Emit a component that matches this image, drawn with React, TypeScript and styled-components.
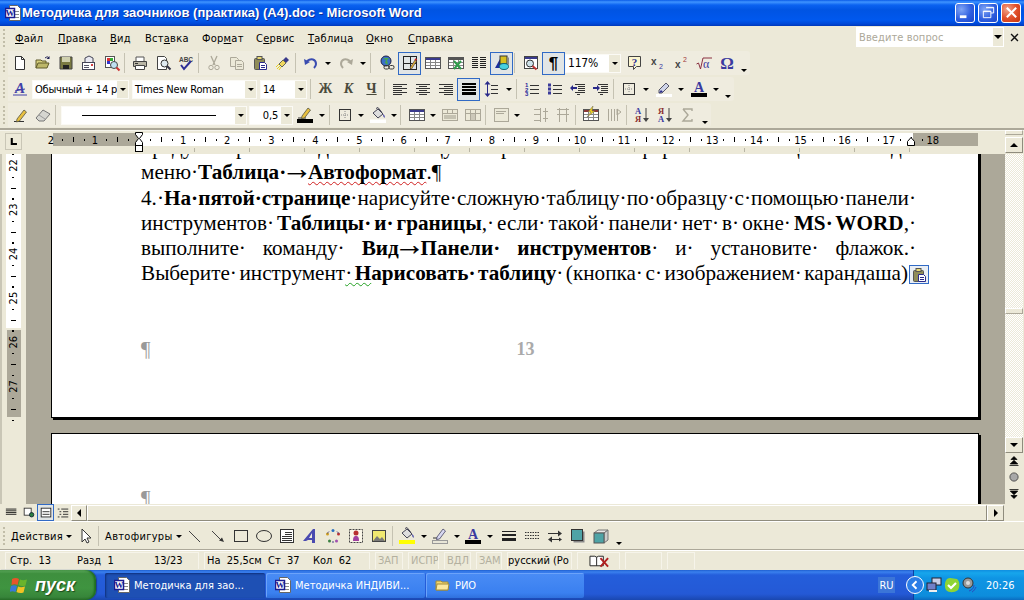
import React from "react";
import styled, { createGlobalStyle, css } from "styled-components";

const UI = `"DejaVu Sans Condensed", "DejaVu Sans", sans-serif`;
const FACE = "#ece9d8";
const DIM = "#aca899";

const Global = createGlobalStyle`
  html, body { margin: 0; padding: 0; width: 1024px; height: 600px; overflow: hidden; background: ${FACE}; }
  #root { width: 1024px; height: 600px; }
  * { box-sizing: border-box; }
`;

const Win = styled.div`
  width: 1024px; height: 600px; display: flex; flex-direction: column; overflow: hidden;
  background: ${FACE}; font: 400 11px ${UI}; font-stretch: condensed; color: #000;
`;

const Title = styled.header`
  height: 26px; flex: none; display: flex; align-items: center; padding: 0 3px 1px 5px; gap: 3px;
  background: linear-gradient(#0a5be8 0, #3f94ff 2px, #0b62f0 5px, #0054e3 10px, #0058ee 20px, #0047d6 24px, #0037b8 26px);
`;
const TitleText = styled.span`
  flex: 1; color: #fff; font: 700 13px "Liberation Sans", sans-serif;
  text-shadow: 1px 1px 0 #0f2f9a; white-space: nowrap; margin-left: -2px;
`;
const WinBtn = styled.div<{ $close?: boolean }>`
  width: 20px; height: 20px; border: 1px solid #fff; border-radius: 3px; display: flex; align-items: center; justify-content: center;
  background: ${p => p.$close
    ? "radial-gradient(circle at 30% 30%, #f0a58c, #e2512c 50%, #c4340d)"
    : "radial-gradient(circle at 30% 30%, #7fa5f5, #2f5fe0 55%, #1d47c8)"};
`;

const Menu = styled.nav`height: 24px; flex: none; display: flex; align-items: center; padding-left: 3px;`;
const Grip = styled.div`
  width: 2px; height: 18px; flex: none; margin-right: 3px;
  background: repeating-linear-gradient(#c1bda8 0 2px, transparent 2px 4px);
`;
const MenuItem = styled.span<{ $w: number }>`
  width: ${p => p.$w}px; flex: none; font-size: 11px; letter-spacing: .25px; white-space: nowrap;
  u { text-underline-offset: 1px; }
`;
const Ask = styled.div`
  margin-left: auto; width: 148px; height: 20px; background: #fff; display: flex; align-items: center;
  color: ${DIM}; padding-left: 3px; font-size: 11px; letter-spacing: .1px;
  justify-content: space-between; margin-top: -2px;
`;
const AskDrop = styled.span`width: 11px; height: 100%; background: ${FACE}; border: 1px solid #fff; border-width: 1px 1px 1px 0; display: flex; align-items: center; justify-content: center;`;
const CloseX = styled.span`width: 20px; flex: none; display: flex; justify-content: center; margin-top: -2px;`;

const Bar = styled.div`height: 26px; flex: none; padding-left: 3px; display: flex; align-items: center;`;
const BarBody = styled.div`
  height: 24px; display: flex; align-items: center; border-radius: 0 3px 3px 0; background: #efecdf;
`;
const Tool = styled.div<{ $on?: boolean; $w?: number }>`
  width: ${p => p.$w ?? 23}px; height: 23px; flex: none; display: flex; align-items: center; justify-content: center;
  ${p => p.$on && css`border: 1px solid #316ac5; background: #e1e5e6;`}
`;
const Caret = styled.div<{ $w: number }>`
  width: ${p => p.$w}px; height: 22px; flex: none; display: flex; align-items: center; justify-content: center;
  &::after { content: ""; border: 3px solid transparent; border-top: 3px solid #000; border-bottom: 0; width: 0; height: 0; }
`;
const More = styled(Caret)`align-items: flex-end; padding-bottom: 2px;`;
const Sep = styled.div`width: 1px; height: 20px; flex: none; margin: 0 3px 0 1px; background: #c5c2b2;`;
const Gap = styled.div<{ $w: number }>`width: ${p => p.$w}px; flex: none;`;
const Combo = styled.div<{ $w: number; $mr?: number; $ml?: number; $size?: number }>`
  width: ${p => p.$w}px; height: 19px; flex: none; display: flex; align-items: center; background: #fff; overflow: hidden;
  margin-left: ${p => p.$ml ?? 0}px; margin-right: ${p => p.$mr ?? 0}px; font-size: ${p => p.$size ?? 11}px;
  white-space: nowrap; border: 1px solid #fbfaf5; letter-spacing: -.2px;
`;
const ComboText = styled.span<{ $right?: boolean }>`
  flex: 1; min-width: 0; overflow: hidden; padding-left: 2px; text-align: ${p => p.$right ? "right" : "left"}; padding-right: ${p => p.$right ? 3 : 0}px;
`;
const ComboDrop = styled.span`
  width: 11px; height: 100%; flex: none; background: ${FACE}; display: flex; align-items: center; justify-content: center;
  &::after { content: ""; border: 3px solid transparent; border-top: 3px solid #000; border-bottom: 0; }
`;
const BoldBtn = styled.span<{ $i?: boolean; $u?: boolean }>`
  font: ${p => (p.$i ? "italic " : "")}700 14px "Liberation Serif", serif; color: #4a4a3c;
  text-decoration: ${p => p.$u ? "underline" : "none"};
`;
const Pilcrow = styled.span`font: 700 17px "Liberation Sans", sans-serif; color: #000; margin-top: 1px;`;
const ToolText = styled.span`padding: 0 2px 0 3px; display: flex; align-items: center; gap: 3px; font-size: 11px; letter-spacing: .3px; white-space: nowrap;`;

const RulerRow = styled.div`
  height: 26px; flex: none; display: flex; align-items: flex-start; padding-left: 5px;
  border-top: 2px solid #aca899; box-shadow: inset 0 1px 0 #fff8;
`;
const Corner = styled.div`
  width: 17px; height: 17px; margin-top: 3px; border: 1px solid #aca899; border-color: #fff #aca899 #aca899 #fff; flex: none;
  display: flex; align-items: center; justify-content: center; outline: 1px solid #c9c6b6; outline-offset: -1px;
`;
const RulerSvg = styled.svg`width: 925px; height: 24px; margin-left: 31px; flex: none; overflow: visible;`;
const TopCol = styled.div`
  margin-left: auto; width: 18px; margin-right: 1px; flex: none; display: flex; flex-direction: column;
`;
const Split = styled.div`height: 5px; border: 1px solid #aca899; border-top-color: #fff; border-left-color: #fff; margin-bottom: 2px;`;

const Main = styled.div`height: 350px; flex: none; display: flex;`;
const VRulerSvg = styled.svg`width: 26px; height: 350px; flex: none;`;
const Work = styled.main`flex: 1; min-width: 0; background: ${DIM}; overflow: hidden; padding-left: 25px;`;
const Page = styled.article<{ $top: number; $h: number; $pad: number }>`
  width: 928px; height: ${p => p.$h}px; margin-top: ${p => p.$top}px; background: #fff; border: 1px solid #000;
  box-shadow: 2px 2px 0 #000; padding: ${p => p.$pad}px 0 0 89px; font: 400 21.2px/25.3px "Liberation Serif", serif;
`;
const Line = styled.div<{ $free?: boolean; $w?: number }>`
  width: ${p => p.$w ?? 775}px; flex: none; white-space: nowrap; word-spacing: -.25em; text-align: ${p => p.$free ? "left" : "justify"};
  text-align-last: ${p => p.$free ? "left" : "justify"};
`;
const LastRow = styled.div`display: flex; align-items: center;`;
const Wavy = styled.span<{ $c: string }>`
  text-decoration: underline wavy ${p => p.$c} 1px; text-underline-offset: 2px; text-decoration-skip-ink: none;
`;
const Arrow = styled.span`display: inline-block; font-size: 1.45em; font-weight: 400; line-height: 0; margin: 0 -4.5px; -webkit-text-stroke: .3px #000;`;
const Mark = styled.span`color: #999; font: 400 21px/1 "Liberation Serif", serif;`;
const Anchor = styled.span`
  display: flex; width: 20px; height: 19px; border: 1px solid #316ac5; background: #e9eef4; flex: none;
  align-items: center; justify-content: center; margin: 1px 0 0 1px;
`;
const Footer = styled.div<{ $mt: number }>`
  margin-top: ${p => p.$mt}px; width: 775px; display: flex; height: 24px; align-items: center;
`;
const PageNo = styled.span`margin-left: 366px; color: #aaa; font: 700 18px "Liberation Serif", serif;`;

const VScroll = styled.aside`width: 18px; flex: none; margin-right: 1px; display: flex; flex-direction: column; background: ${FACE};`;
const Track = styled.div`
  flex: 1; padding-top: 154px;
  background: repeating-conic-gradient(#fff 0 25%, ${FACE} 0 50%) 0 0 / 2px 2px;
`;
const Thumb = styled.div`height: 6px; background: ${FACE}; border: 1px solid #aca899; border-top-color: #fff; border-left-color: #fff;`;
const ScrollBtn = styled.div<{ $w?: number; $h?: number }>`
  width: ${p => p.$w ?? 18}px; height: ${p => p.$h ?? 16}px; flex: none; background: ${FACE}; display: flex; align-items: center; justify-content: center;
  border: 1px solid; border-color: #fff #8f8c7d #8f8c7d #fff;
`;
const Browse = styled.div`height: 51px; flex: none; display: flex; flex-direction: column; align-items: center; justify-content: space-around; padding-bottom: 2px;`;

const HScroll = styled.div`height: 17px; flex: none; display: flex; align-items: center; padding-left: 3px;`;
const ViewBtn = styled.div<{ $on?: boolean }>`
  width: 17px; height: 17px; flex: none; display: flex; align-items: center; justify-content: center;
  ${p => p.$on && css`border: 1px solid #316ac5; background: #e1e5e6;`}
`;
const HThumb = styled.div`flex: none; width: 900px; height: 16px; background: ${FACE}; border: 1px solid; border-color: #fff #8f8c7d #8f8c7d #fff;`;

const DrawBar = styled.div`
  height: 28px; flex: none; display: flex; align-items: center; padding-left: 3px; border-top: 1px solid #fff; padding-top: 1px;
`;
const Status = styled.footer`
  height: 21px; flex: none; display: flex; align-items: center; padding: 0 0 0 5px; border-top: 1px solid #aca899; box-shadow: inset 0 1px 0 #fff; gap: 5px;
`;
const Cell = styled.div<{ $w: number; $dim?: boolean; $pl?: number }>`
  width: ${p => p.$w}px; height: 17px; flex: none; display: flex; align-items: center; white-space: pre; padding-left: ${p => p.$pl ?? 0}px;
  color: ${p => p.$dim ? "#b3b09f" : "#000"}; border: 1px solid #f6f4ea; border-width: 1px 1px 0 1px; font-size: 11px; overflow: hidden;
`;
const Span = styled.span<{ $w: number }>`width: ${p => p.$w}px; flex: none;`;

const Taskbar = styled.div`
  height: 30px; flex: none; display: flex; align-items: center; color: #fff;
  background: linear-gradient(#1f5fd0 0, #3a80ee 2px, #245edb 5px, #2459d6 24px, #1a47b0 30px);
`;
const Start = styled.div`
  width: 96px; height: 30px; flex: none; display: flex; align-items: center; gap: 5px; padding-left: 10px; margin-right: 9px;
  border-radius: 0 10px 10px 0; box-shadow: inset -2px 0 2px #1f6d1f, 1px 0 1px #1b3e8c;
  background: linear-gradient(#5eab5e 0, #3e8f3e 12%, #3f9440 60%, #37853a 90%, #2a6e2c 100%);
`;
const StartText = styled.span`font: italic 700 18px "Liberation Sans", sans-serif; color: #fff; text-shadow: 1px 1px 1px #1c4a1c;`;
const Task = styled.div<{ $on?: boolean; $w: number }>`
  width: ${p => p.$w}px; height: 25px; flex: none; display: flex; align-items: center; gap: 4px; padding-left: 9px; margin-right: 1px;
  border-radius: 2px; font-size: 11px; white-space: nowrap; overflow: hidden;
  background: ${p => p.$on ? "#1e50b4" : "linear-gradient(#4a8cf5, #3a80f0 80%, #2f70dd)"};
  box-shadow: ${p => p.$on ? "inset 1px 1px 2px #0f2f7a" : "inset 1px 1px 0 #6ba3fa"};
`;
const Lang = styled.span`
  margin-left: auto; width: 17px; height: 16px; background: #3b75d8; display: flex; align-items: center; justify-content: center; font-size: 11px; margin-right: 18px;
`;
const Tray = styled.div`
  width: 111px; height: 30px; flex: none; display: flex; align-items: center; gap: 2px;
  background: linear-gradient(#0f8ee0 0, #17a6ec 3px, #0f95e4 8px, #0d8ddc 26px, #0a6cc0 30px);
  border-left: 1px solid #0d3fa0; font-size: 11px;
`;
const Chevron = styled.div`
  width: 18px; height: 18px; border-radius: 50%; border: 1px solid #fff; margin: 0 0 0 -8px; background: #2b7de6;
  display: flex; align-items: center; justify-content: center; flex: none;
`;
const Clock = styled.span`margin-left: 6px;`;

const Glyph = styled.svg<{ $w?: number; $h?: number }>`
  width: ${p => p.$w ?? 16}px; height: ${p => p.$h ?? 16}px; flex: none; display: block;
`;

const serif = "Liberation Serif, serif";
const sans = "Liberation Sans, sans-serif";
const tableGrid = (c = "#555", head = "#3a3a8c") => (
  <>
    <rect x=".5" y="2.5" width="15" height="11" fill="#fff" stroke={c} />
    <rect x="1" y="3" width="14" height="2" fill={head} />
    <path d="M1 7.5h14M1 10.5h14M5.5 5v8M10.5 5v8" stroke={c} opacity=".7" />
  </>
);
const lines = (rows: [number, number, number][], c = "#333") => (
  <path d={rows.map(([y, a, b]) => `M${a} ${y}.5H${b}`).join("")} stroke={c} fill="none" />
);
const Aletter = (c: string) => <text x="8" y="11" textAnchor="middle" fontFamily={serif} fontWeight="700" fontSize="14" fill={c}>A</text>;
const bucket = <><path d="M3 7l5-4 5 5-5 4z" fill="#ddd" stroke="#445" /><path d="M6 2.5l2-1 4 5" fill="none" stroke="#445" /><path d="M13 8c2 1 2 3 1.5 4-1-1-1.5-2-1.5-4z" fill="#4a4aa8" /></>;
const smallFolder = <><path d="M1 4h5l1 1h6v8H1z" fill="#f3d66e" stroke="#a08c3a" /><path d="M2 7h12l-1 6H1z" fill="#fbe9a0" stroke="#a08c3a" /></>;

const icons: Record<string, React.ReactNode> = {
  new: <><path d="M3.5 1.5h6l3 3v10h-9z" fill="#fff" stroke="#333" /><path d="M9.5 1.5v3h3" fill="none" stroke="#333" /></>,
  open: <><path d="M1 13V5h5l1 1h4v2" fill="#d6cf7c" stroke="#5e5a2a" /><path d="M1 13l2-5h11l-2 5z" fill="#bdb76a" stroke="#5e5a2a" /><path d="M10 3c2-1.5 3-1.5 4 0" fill="none" stroke="#225" /><path d="M14.5 1v3h-3z" fill="#225" /></>,
  save: <><path d="M2 2h12v12H2z" fill="#7a7a42" stroke="#444" /><rect x="4" y="2" width="8" height="5" fill="#cfcfae" /><rect x="5" y="10" width="6" height="4" fill="#222" /></>,
  mail: <><rect x="1.5" y="7.5" width="12" height="7" fill="#fff" stroke="#445" /><path d="M4 7V3l4-2 4 2v4" fill="#e9e9f2" stroke="#445" />{lines([[10, 3, 8], [12, 3, 8]], "#556")}<rect x="10" y="9" width="2" height="2" fill="#d04040" /></>,
  perm: <><rect x="1.5" y="1.5" width="9" height="11" fill="#fff" stroke="#555" /><rect x="3" y="3" width="3" height="3" fill="#d33" /><rect x="6" y="3" width="3" height="3" fill="#3a3" /><rect x="3" y="6" width="3" height="3" fill="#33c" /><circle cx="10" cy="10" r="3.5" fill="#bfe0f0" stroke="#444" /><path d="M12.5 12.5l3 3" stroke="#c33" strokeWidth="2" /></>,
  print: <><path d="M4 6V2h8v4" fill="#fff" stroke="#555" /><path d="M1.5 6.5h13v5h-13z" fill="#b9b6a6" stroke="#444" /><path d="M3.5 10.5h9v4h-9z" fill="#fff" stroke="#444" />{lines([[8, 3, 6]], "#333")}</>,
  preview: <><path d="M2.5 1.5h7l2 2v11h-9z" fill="#fff" stroke="#444" /><circle cx="9.5" cy="8.5" r="3.5" fill="#dfeaf0" stroke="#333" /><path d="M12 11l3.5 3.5" stroke="#334" strokeWidth="2" /></>,
  spell: <><text x="8" y="6.5" textAnchor="middle" fontFamily={sans} fontWeight="700" fontSize="6.5" fill="#444">ABC</text><path d="M3 10l3 4 7-8" fill="none" stroke="#2d2f96" strokeWidth="2" /></>,
  cut: <><path d="M5 1l4 9M11 1L7 10" stroke={DIM} fill="none" strokeWidth="1.3" /><circle cx="5" cy="12.5" r="2.2" fill="none" stroke={DIM} /><circle cx="11" cy="12.5" r="2.2" fill="none" stroke={DIM} /></>,
  copy: <><path d="M1.5 2.5h6l2 2v7h-8z" fill={FACE} stroke={DIM} /><path d="M6.5 5.5h6l2 2v7h-8z" fill={FACE} stroke={DIM} />{lines([[9, 8, 13], [11, 8, 13]], DIM)}</>,
  paste: <><rect x="2.5" y="3.5" width="10" height="11" rx="1" fill="#8f8c58" stroke="#555" /><rect x="5" y="1.5" width="5" height="3" fill="#e8d870" stroke="#555" /><path d="M7.5 7.5h5l2 2v5h-7z" fill="#fff" stroke="#2a2a8a" />{lines([[10, 9, 13], [12, 9, 13]], "#2a2a8a")}</>,
  painter: <><path d="M11 2l3 3-3 3-3-3z" fill="#3a3a8a" /><path d="M8 5l3 3-4 4-3-3z" fill="#f0d860" stroke="#665" /><path d="M4 9l-3 3M5 11l-3 3M6 12l-2 3" stroke="#e8d020" /></>,
  undo: <><path d="M4 6c4-3 9-2 9 3 0 2-1 3-2 4" fill="none" stroke="#3a4cb0" strokeWidth="2" /><path d="M1 4l1 6 5-3z" fill="#3a4cb0" /></>,
  redo: <><path d="M12 6C8 3 3 4 3 9c0 2 1 3 2 4" fill="none" stroke={DIM} strokeWidth="2" /><path d="M15 4l-1 6-5-3z" fill={DIM} /></>,
  link: <><circle cx="7" cy="6" r="5" fill="#3b6fc8" stroke="#224" /><path d="M4 3l3 2-1 3 3 2-1-5 2-2z" fill="#4aa84a" /><rect x="5" y="10.5" width="5" height="3.5" rx="1.5" fill="none" stroke="#333" /><rect x="10" y="10.5" width="5" height="3.5" rx="1.5" fill="none" stroke="#333" /></>,
  tabbord: <><rect x="1.5" y="1.5" width="13" height="13" fill="none" stroke="#222" /><path d="M8.5 2v12M2 8.5h12" stroke="#222" /><path d="M8 13l5-8 1.5 1-5 8z" fill="#e8b830" stroke="#544" strokeWidth=".7" /><path d="M13 4l1.5 1" stroke="#c22" strokeWidth="2" /></>,
  table: tableGrid(),
  excel: <>{tableGrid("#555", "#555")}<path d="M6 6l7 8M13 6l-7 8" stroke="#2f9c4c" strokeWidth="2" /></>,
  cols: lines([[2, 1, 7], [4, 1, 7], [6, 1, 7], [8, 1, 7], [10, 1, 7], [12, 1, 7], [2, 9, 15], [4, 9, 15], [6, 9, 15], [8, 9, 15], [10, 9, 15], [12, 9, 15]], "#222"),
  drawing: <><path d="M1 13l5-9v9z" fill="#1c2e9c" /><rect x="6" y="1" width="7" height="8" fill="#d8c020" stroke="#333" /><path d="M13 1l2 2v7l-2-1z" fill="#888" /><ellipse cx="10" cy="11.5" rx="4.5" ry="3" fill="#48d0e0" stroke="#167" /></>,
  docmap: <><rect x="1.5" y="1.5" width="13" height="12" fill="#fff" stroke="#444" /><rect x="2" y="2" width="12" height="2" fill="#3a3a8c" /><circle cx="7" cy="8.5" r="3.5" fill="#cfe3ea" stroke="#333" /><path d="M9.5 11l4 3.5" stroke="#b33" strokeWidth="2" /></>,
  help: <><path d="M1.5 1.5h12v10h-4l-3 3v-3h-5z" fill="#fbf5cf" stroke="#444" /><text x="7.5" y="10.5" textAnchor="middle" fontFamily={serif} fontWeight="700" fontSize="11" fill="#2a2a90">?</text></>,
  sub: <><text x="1" y="10" fontFamily={sans} fontWeight="700" fontSize="10" fill="#444">x</text><text x="9" y="14" fontFamily={sans} fontSize="7" fill="#3a3aa0">2</text></>,
  sup: <><text x="2" y="13" fontFamily={sans} fontWeight="700" fontSize="10" fill="#444">x</text><text x="10" y="7" fontFamily={sans} fontSize="7" fill="#a03a3a">2</text></>,
  sqrt: <><path d="M.5 9l2-1 2 6L7 3h9" fill="none" stroke="#8a3040" /><text x="7" y="13" fontFamily={serif} fontSize="12" fill="#3a3aa0">α</text></>,
  omega: <text x="8" y="13.5" textAnchor="middle" fontFamily={serif} fontWeight="700" fontSize="17" fill="#3a3aa0">Ω</text>,
  style: <><text x="8" y="12" textAnchor="middle" fontFamily={serif} fontStyle="italic" fontWeight="700" fontSize="15" fill="#4040a8">A</text><path d="M1 14h14M3 10l10-2" stroke="#4040a8" /></>,
  left: lines([[3, 1, 15], [5, 1, 10], [7, 1, 15], [9, 1, 10], [11, 1, 15], [13, 1, 10]]),
  center: lines([[3, 1, 15], [5, 4, 12], [7, 1, 15], [9, 4, 12], [11, 1, 15], [13, 4, 12]]),
  right: lines([[3, 1, 15], [5, 6, 15], [7, 1, 15], [9, 6, 15], [11, 1, 15], [13, 6, 15]]),
  justify: lines([[2, 1, 15], [3, 1, 15], [5, 1, 15], [6, 1, 15], [8, 1, 15], [9, 1, 15], [11, 1, 15], [12, 1, 15], [13, 1, 15]], "#000"),
  spacing: <>{lines([[4, 7, 14], [8, 7, 14], [12, 7, 14]])}<path d="M3.5 3v10" stroke="#2a2a8a" /><path d="M3.5 0l3 3.5h-6zM3.5 16l3-3.5h-6z" fill="#2a2a8a" /></>,
  numbered: <>{lines([[4, 6, 15], [8, 6, 15], [12, 6, 15]])}<text x="1" y="6" fontFamily={sans} fontWeight="700" fontSize="6" fill="#2a2a9a">1</text><text x="1" y="10.5" fontFamily={sans} fontWeight="700" fontSize="6" fill="#2a2a9a">2</text><text x="1" y="15" fontFamily={sans} fontWeight="700" fontSize="6" fill="#2a2a9a">3</text></>,
  bullets: <>{lines([[4, 6, 15], [8, 6, 15], [12, 6, 15]])}<path d="M1 2.5h3v3H1zM1 6.5h3v3H1zM1 10.5h3v3H1z" fill="#3a3a9a" /></>,
  outdent: <>{lines([[3, 5, 15], [5, 8, 15], [7, 8, 15], [9, 8, 15], [11, 5, 15], [13, 7, 10]])}<path d="M0 7l3-3v2h4v2H3v2z" fill="#2a2a8a" /></>,
  indent: <>{lines([[3, 5, 15], [5, 8, 15], [7, 8, 15], [9, 8, 15], [11, 5, 15], [13, 7, 10]])}<path d="M7 7L4 4v2H0v2h4v2z" fill="#2a2a8a" /></>,
  border: <><rect x="2.5" y="2.5" width="11" height="11" fill="none" stroke="#333" /><path d="M8 4v8M4 8h8" stroke="#888" strokeDasharray="1 1" /></>,
  highlight: <><path d="M3 9l7-7 3 3-7 7H3z" fill="#cfd4e8" stroke="#556" /><path d="M3 12l2-3 2 2z" fill="#2a2a8a" /><rect x="0" y="13" width="16" height="3" fill="#fff" /></>,
  fontColor: <>{Aletter("#3a3aa0")}<rect y="12" width="16" height="4" fill="#000" /></>,
  pencil: <><path d="M2 14.5h10" stroke="#333" /><path d="M5 12l7-9 2.5 2-7 9-3 1z" fill="#e8c040" stroke="#554" strokeWidth=".8" /></>,
  eraser: <><path d="M1 11l7-8 7 4-6 7H4z" fill="#d6d6d0" stroke="#777" /><path d="M4 8l6 4" stroke="#999" /></>,
  penColor: <><path d="M1 11h8" stroke="#333" /><path d="M5 9l6-8 2.5 2-6 8-3 .5z" fill="#e8c040" stroke="#554" strokeWidth=".8" /><rect y="12" width="16" height="4" fill="#000" /></>,
  fill: <><g transform="translate(0 -1)">{bucket}</g><rect x="0" y="12.5" width="16" height="3.5" fill="#fff" /></>,
  itable: tableGrid(),
  merge: <><rect x=".5" y="2.5" width="15" height="11" fill={FACE} stroke={DIM} /><path d="M1 6.5h14M5.5 3v3M10.5 3v3" stroke={DIM} /><rect x="2" y="8" width="12" height="4" fill={DIM} opacity=".6" /></>,
  split: <><rect x=".5" y="2.5" width="15" height="11" fill={FACE} stroke={DIM} /><path d="M1 6.5h14M5.5 3v10M10.5 3v10" stroke={DIM} /><rect x="6" y="7" width="4" height="6" fill={DIM} opacity=".5" /></>,
  alignCell: <><rect x="1.5" y="1.5" width="14" height="13" fill={FACE} stroke={DIM} />{lines([[4, 3, 13], [6, 3, 11]], DIM)}</>,
  distR: <path d="M2 2.5h6M2 7.5h6M2 13.5h6M13.5 1v14M11 4.5h5M11 11.5h5M8.5 1v14" stroke={DIM} fill="none" />,
  distC: <path d="M2 2.5h12M2 7.5h12M4.5 1v14M11.5 1v14" stroke={DIM} fill="none" />,
  auto: <>{tableGrid("#555", "#8c3a3a")}<path d="M10 -1L5 5h3L4 10l8-6H9z" fill="#f0d020" stroke="#665" strokeWidth=".5" /></>,
  dirT: <path d="M2.5 2v12M5.5 2v12M8.5 2v12M11.5 2v12M11 2l4 3-4 3z" stroke={DIM} fill={FACE} />,
  az: <><text x="4" y="7" textAnchor="middle" fontFamily={serif} fontWeight="700" fontSize="8.5" fill="#3a3aa0">A</text><text x="4" y="15" textAnchor="middle" fontFamily={serif} fontWeight="700" fontSize="8.5" fill="#8a3030">Я</text><path d="M12 1v12" stroke="#444" /><path d="M9 11h6l-3 4z" fill="#444" /></>,
  za: <><text x="4" y="7" textAnchor="middle" fontFamily={serif} fontWeight="700" fontSize="8.5" fill="#8a3030">Я</text><text x="4" y="15" textAnchor="middle" fontFamily={serif} fontWeight="700" fontSize="8.5" fill="#3a3aa0">A</text><path d="M12 1v12" stroke="#444" /><path d="M9 11h6l-3 4z" fill="#444" /></>,
  sigma: <path d="M3 2h9v2M3 2l5 6-5 6h9v-2" fill="none" stroke={DIM} strokeWidth="1.4" />,
  pointer: <path d="M4 1v13l3-3 2 4 2-1-2-4h4z" fill="#fff" stroke="#333" />,
  dline: <path d="M2 3l11 11" stroke="#444" />,
  darrow: <><path d="M2 3l9 9" stroke="#444" /><path d="M14 14l-5-1.5 3-3z" fill="#333" /></>,
  rect: <rect x="1.5" y="2.5" width="13" height="11" fill="none" stroke="#333" />,
  ellipse: <ellipse cx="8" cy="8" rx="7.5" ry="5.5" fill="none" stroke="#333" />,
  textbox: <><rect x="1.5" y="1.5" width="13" height="13" fill="#fff" stroke="#333" />{lines([[4, 6, 13], [6, 6, 13], [8, 3, 13], [10, 3, 13], [12, 3, 13]])}</>,
  wordart: <><path d="M1 13L11 1h2v14h-3v-3H6l-2 1z" fill="#4a4ab0" /><path d="M10 5v5H7z" fill="#efecdf" /></>,
  diagram: <><circle cx="8" cy="2.5" r="1.5" fill="#2a70c0" /><circle cx="13.5" cy="6" r="1.5" fill="#c03030" /><circle cx="11.5" cy="13" r="1.5" fill="#a050b0" /><circle cx="4.5" cy="13" r="1.5" fill="#3a8040" /><circle cx="2.5" cy="6" r="1.5" fill="#d0a020" /><path d="M4 3.5c-1 1-1.5 1.5-1.5 2M12 3.5c1 1 1.5 1.5 1.5 2M7 14h2" stroke="#448" fill="none" /></>,
  clip: <><rect x="1.5" y="1.5" width="13" height="13" fill="#faf6e8" stroke="#444" strokeDasharray="2 1" /><circle cx="8" cy="5" r="2.5" fill="#b83030" /><path d="M5 13c0-4 1-5 3-5s3 1 3 5z" fill="#a040a0" /></>,
  image: <><rect x="1.5" y="2.5" width="13" height="11" fill="#f0e870" stroke="#444" /><path d="M2 13l4-5 3 3 2-2 3 4z" fill="#7a7a78" /></>,
  dfill: <><g transform="translate(0 -2)">{bucket}</g><rect y="12" width="16" height="4" fill="#ffff00" /></>,
  dpen: <><path d="M1 10h7" stroke="#333" /><path d="M5 9l6-8 2.5 2-6 8-3 .5z" fill="#d8d8f0" stroke="#446" strokeWidth=".8" /><rect x=".5" y="12.5" width="15" height="3" fill="#e8e6d8" stroke="#999" /></>,
  lstyle: lines([[3, 1, 15], [6, 1, 15], [7, 1, 15], [10, 1, 15], [11, 1, 15], [12, 1, 15]], "#222"),
  dash: <path d="M1 4.5h14M1 7.5h14M1 10.5h14" stroke="#333" strokeDasharray="1.5 1" fill="none" />,
  arrows: <><path d="M1 5.5h13M3 11.5h11" stroke="#333" /><path d="M15 5.5l-4-3v6zM1 11.5l4-3v6zM15 11.5l-3-2v4z" fill="#333" /></>,
  shadow: <><rect x="3.5" y="3.5" width="11" height="11" fill="#888" /><rect x="1.5" y="1.5" width="11" height="11" fill="#4ea3a6" stroke="#333" /></>,
  d3: <><path d="M1 5l4-3h10l-4 3z" fill="#e8e8e8" stroke="#777" /><path d="M11 5l4-3v10l-4 3z" fill="#ccc" stroke="#777" /><rect x="1" y="5" width="10" height="10" fill="#4ea3a6" stroke="#555" /></>,
  view1: lines([[3, 1, 13], [5, 1, 13], [7, 1, 13], [9, 1, 13]], "#111"),
  view2: <><rect x="2.5" y="2.5" width="8" height="8" fill="#fff" stroke="#333" /><circle cx="11" cy="10" r="2.5" fill="#2a8040" stroke="#123" /></>,
  view3: <><rect x="2.5" y="2.5" width="11" height="10" fill="#fff" stroke="#222" />{lines([[6, 4, 12], [9, 4, 12]], "#222")}</>,
  view4: <path d="M2 3.5h2M6 3.5h8M4 6.5h2M8 6.5h6M4 9.5h2M8 9.5h6M2 12.5h2M6 12.5h8" stroke="#222" />,
};

const Icon = ({ n, w, h }: { n: string; w?: number; h?: number }) => (
  <Glyph viewBox="0 0 16 16" $w={w} $h={h} overflow="visible">{icons[n]}</Glyph>
);

const Items = ({ spec }: { spec: string }) => (
  <>
    {spec.split(" ").map((t, i) => {
      if (t === "|") return <Sep key={i} />;
      if (t === "v") return <Caret key={i} $w={12} />;
      if (t === "w") return <Caret key={i} $w={10} />;
      if (t === "+") return <More key={i} $w={12} />;
      if (t[0] === "_") return <Gap key={i} $w={Number(t.slice(1))} />;
      const on = t[0] === "!";
      return <Tool key={i} $on={on}><Icon n={on ? t.slice(1) : t} /></Tool>;
    })}
  </>
);

const WordDoc = () => (
  <Glyph viewBox="0 0 16 16">
    <path d="M4.5 .5h8l3 3v12h-11z" fill="#fff" stroke="#666" />
    {lines([[6, 9, 14], [9, 9, 14], [12, 6, 14]], "#888")}
    <rect x=".5" y="3.5" width="9" height="9" fill="#fff" stroke="#1a1a90" strokeWidth="1.5" />
    <text x="5" y="11" textAnchor="middle" fontFamily={serif} fontWeight="700" fontSize="9" fill="#1a1a90">W</text>
  </Glyph>
);

const menus: [string, number][] = [
  ["Файл", 43], ["Правка", 52], ["Вид", 35], ["Вставка", 57], ["Формат", 54],
  ["Сервис", 52], ["Таблица", 58], ["Окно", 42], ["Справка", 60],
];
const underlineAt: Record<string, number> = { Файл: 0, Правка: 0, Вид: 0, Вставка: 3, Формат: 3, Сервис: 1, Таблица: 0, Окно: 0, Справка: 0 };

const HRuler = () => {
  const cm = 44.1, o = 139;
  const marks: React.ReactNode[] = [];
  for (let k = -2; k <= 18; k++) {
    const x = o + k * cm;
    if (k !== 0) marks.push(<text key={`n${k}`} x={x} y="14" textAnchor="middle" fontFamily="DejaVu Sans Condensed, DejaVu Sans, sans-serif" fontSize="11" fill="#000">{Math.abs(k)}</text>);
    if (k < 18) {
      marks.push(<rect key={`a${k}`} x={Math.round(x + cm * .25)} y="9" width="1" height="2" fill="#000" />);
      marks.push(<rect key={`b${k}`} x={Math.round(x + cm * .5)} y="7" width="1" height="5" fill="#000" />);
      marks.push(<rect key={`c${k}`} x={Math.round(x + cm * .75)} y="9" width="1" height="2" fill="#000" />);
    }
  }
  const cols = Array.from({ length: 14 }, (_, i) => 194 + i * 55);
  return (
    <RulerSvg viewBox="53 0 925 24">
      <rect x="53" y="3" width="925" height="13" fill={DIM} />
      <rect x="140" y="3" width="771" height="13" fill="#fff" />
      <rect x="911" y="3" width="2" height="13" fill="#fff" />
      {marks}
      {cols.map(x => <rect key={x} x={x} y="18" width="1" height="4" fill="#b8b5a4" />)}
      <path d="M135.5 2.5h7v2l-3 4 3 4v3.5h-7v-3.5l3-4-3-4z" fill="#fff" stroke="#000" />
      <rect x="135.5" y="15.5" width="7" height="6" fill="#fff" stroke="#000" />
      <path d="M907.5 15.5v-4l3.5-4 3.5 4v4z" fill="#fff" stroke="#000" />
    </RulerSvg>
  );
};

const VRuler = () => {
  const nums = [22, 23, 24, 25, 26, 27];
  return (
    <VRulerSvg viewBox="0 154 26 350">
      <rect x="0" y="154" width="2" height="350" fill="#c9c6b6" />
      <rect x="6" y="154" width="15" height="174" fill="#fff" />
      <rect x="7" y="330" width="14" height="87" fill={DIM} />
      {nums.map((n, i) => {
        const y = 165.5 + i * 44.2;
        return (
          <g key={n}>
            <text transform={`translate(17 ${y}) rotate(-90)`} textAnchor="middle" fontFamily="DejaVu Sans Condensed, DejaVu Sans, sans-serif" fontSize="11" fill="#000">{n}</text>
            <rect x="12" y={Math.round(y - 12)} width="2" height="1" fill="#000" />
            <rect x="12" y={Math.round(y + 11)} width="2" height="1" fill="#000" />
            <rect x="11" y={Math.round(y + 22)} width="5" height="1" fill="#000" />
            <rect x="12" y={Math.round(y + 33)} width="2" height="1" fill="#000" />
          </g>
        );
      })}
    </VRulerSvg>
  );
};

const Tri = ({ d }: { d: "u" | "d" | "l" | "r" }) => {
  const p = { u: "M4 10h8L8 6z", d: "M4 6h8l-4 4z", l: "M10 4v8L6 8z", r: "M6 4v8l4-4z" }[d];
  return <Glyph viewBox="0 0 16 16"><path d={p} fill="#000" /></Glyph>;
};

export default function App() {
  return (
    <Win>
      <Global />
      <Title>
        <WordDoc />
        <TitleText>Методичка для заочников (практика) (A4).doc - Microsoft Word</TitleText>
        <WinBtn>
          <Glyph viewBox="0 0 16 16" $w={15} $h={15}><rect x="2" y="11" width="7" height="3" fill="#fff" /></Glyph>
        </WinBtn>
        <WinBtn>
          <Glyph viewBox="0 0 16 16" $w={15} $h={15}><path d="M5.5 2.5h8v6h-3M2.5 6.5h8v7h-8z M5.5 3h8M2.5 7h8" fill="none" stroke="#fff" /></Glyph>
        </WinBtn>
        <WinBtn $close>
          <Glyph viewBox="0 0 16 16" $w={15} $h={15}><path d="M3 3l10 10M13 3L3 13" stroke="#fff" strokeWidth="2.2" /></Glyph>
        </WinBtn>
      </Title>

      <Menu>
        <Grip />
        <Span $w={7} />
        {menus.map(([label, w]) => {
          const i = underlineAt[label];
          return (
            <MenuItem key={label} $w={w}>
              {label.slice(0, i)}<u>{label[i]}</u>{label.slice(i + 1)}
            </MenuItem>
          );
        })}
        <Ask>Введите вопрос<AskDrop><Tri d="d" /></AskDrop></Ask>
        <CloseX><Glyph viewBox="0 0 16 16" $w={11} $h={11}><path d="M3 3l10 10M13 3L3 13" stroke="#111" strokeWidth="2" /></Glyph></CloseX>
      </Menu>

      <Bar>
        <Grip />
        <BarBody>
          <Items spec="new open save mail perm | print preview spell | cut copy paste painter | undo v redo v | _1 link !tabbord table excel cols !drawing | _1 docmap" />
          <Tool $on><Pilcrow>¶</Pilcrow></Tool>
          <Combo $w={56} $size={12}><ComboText>117%</ComboText><ComboDrop /></Combo>
          <Span $w={2} />
          <Items spec="help sub sup sqrt omega +" />
        </BarBody>
      </Bar>

      <Bar>
        <Grip />
        <BarBody>
          <Items spec="style" />
          <Combo $w={97} $ml={1} $mr={3}><ComboText>Обычный + 14 р</ComboText><ComboDrop /></Combo>
          <Combo $w={125} $mr={3}><ComboText>Times New Roman</ComboText><ComboDrop /></Combo>
          <Combo $w={47}><ComboText>14</ComboText><ComboDrop /></Combo>
          <Span $w={2} />
          <Sep />
          <Tool><BoldBtn>Ж</BoldBtn></Tool>
          <Tool><BoldBtn $i>К</BoldBtn></Tool>
          <Tool><BoldBtn $u>Ч</BoldBtn></Tool>
          <Items spec="| left center right !justify spacing v | numbered bullets outdent indent | border v highlight v fontColor v +" />
        </BarBody>
      </Bar>

      <Bar>
        <Grip />
        <BarBody>
          <Items spec="pencil eraser |" />
          <Span $w={2} />
          <Combo $w={186} $mr={2}>
            <ComboText><Glyph viewBox="0 0 172 3" $w={172} $h={3}><path d="M18 1.5h134" stroke="#000" /></Glyph></ComboText>
            <ComboDrop />
          </Combo>
          <Combo $w={44}><ComboText $right>0,5</ComboText><ComboDrop /></Combo>
          <Items spec="penColor v | border w fill w | _1 itable w merge split | alignCell w _6 distR distC | auto dirT | az za sigma +" />
        </BarBody>
      </Bar>

      <RulerRow>
        <Corner>
          <Glyph viewBox="0 0 16 16" $w={11} $h={11}><path d="M4 3h3v7h6v3H4z" fill="#000" /></Glyph>
        </Corner>
        <HRuler />
        <TopCol>
          <Split />
          <ScrollBtn><Tri d="u" /></ScrollBtn>
        </TopCol>
      </RulerRow>

      <Main>
        <VRuler />
        <Work>
          <Page $top={-36} $h={300} $pad={16}>
            <Line>предусмотрено создайте таблицу и примените автоформат с помощью команды</Line>
            <Line $free>меню·<b>Таблица·<Arrow>→</Arrow><Wavy $c="#d02020">Автоформат</Wavy></b>.¶</Line>
            <Line>4.· <b>На·пятой·странице</b>· нарисуйте· сложную· таблицу· по· образцу· с· помощью· панели·</Line>
            <Line>инструментов· <b>Таблицы· и· границы</b>,· если· такой· панели· нет· в· окне· <b>MS· WORD</b>,·</Line>
            <Line>выполните· команду· <b>Вид<Arrow>→</Arrow>Панели· инструментов</b>· и· установите· флажок.·</Line>
            <LastRow>
              <Line $w={767}>
                Выберите· инструмент<Wavy $c="#20a020">·<b> Н</b></Wavy><b>арисовать· таблицу</b>· (кнопка· с· изображением· карандаша)
              </Line>
              <Anchor><Icon n="paste" /></Anchor>
            </LastRow>
            <Footer $mt={51}><Mark>¶</Mark><PageNo>13</PageNo></Footer>
          </Page>
          <Page $top={15} $h={200} $pad={52}>
            <Footer $mt={0}><Mark>¶</Mark></Footer>
          </Page>
        </Work>
        <VScroll>
          <Track><Thumb /></Track>
          <ScrollBtn><Tri d="d" /></ScrollBtn>
          <Browse>
            <Glyph viewBox="0 0 16 16" $w={12} $h={12}><path d="M8 2l4 4H4zM8 7l5 5H3zM2 14h12" fill="#000" stroke="#000" /></Glyph>
            <Glyph viewBox="0 0 16 16" $w={12} $h={12}><circle cx="8" cy="8" r="5.5" fill="#a8a8a8" stroke="#333" /></Glyph>
            <Glyph viewBox="0 0 16 16" $w={12} $h={12}><path d="M8 14l4-4H4zM8 9l5-5H3zM2 2h12" fill="#000" stroke="#000" /></Glyph>
          </Browse>
        </VScroll>
      </Main>

      <HScroll>
        <ViewBtn><Icon n="view1" w={14} h={14} /></ViewBtn>
        <ViewBtn><Icon n="view2" w={14} h={14} /></ViewBtn>
        <ViewBtn $on><Icon n="view3" w={14} h={14} /></ViewBtn>
        <ViewBtn><Icon n="view4" w={14} h={14} /></ViewBtn>
        <ScrollBtn $w={16} $h={16}><Tri d="l" /></ScrollBtn>
        <HThumb />
        <ScrollBtn $w={17} $h={16}><Tri d="r" /></ScrollBtn>
      </HScroll>

      <DrawBar>
        <Grip />
        <ToolText>Действия<Caret $w={6} /></ToolText>
        <Items spec="pointer |" />
        <ToolText>Автофигуры<Caret $w={6} /></ToolText>
        <Items spec="dline darrow rect ellipse textbox wordart diagram clip image | dfill w dpen w fontColor w _3 lstyle dash arrows shadow d3 +" />
      </DrawBar>

      <Status>
        <Cell $w={194} $pl={4}><Span $w={67}>Стр.  13</Span><Span $w={77}>Разд  1</Span><span>13/23</span></Cell>
        <Cell $w={166} $pl={2}><Span $w={61}>На  25,5см</Span><Span $w={45}>Ст  37</Span><span>Кол  62</span></Cell>
        <Cell $w={28} $dim $pl={2}>ЗАП</Cell>
        <Cell $w={31} $dim $pl={2}>ИСПР</Cell>
        <Cell $w={27} $dim $pl={2}>ВДЛ</Cell>
        <Cell $w={26} $dim $pl={2}>ЗАМ</Cell>
        <Cell $w={65}>русский (Ро</Cell>
        <Cell $w={43} $pl={11}>
          <Glyph viewBox="0 0 22 14" $w={21} $h={14}>
            <path d="M1 2h5l2 1 2-1h5v10H1zM8 3v9" fill="#fff" stroke="#222" />
            <path d="M12 4l8 9M20 4l-8 9" stroke="#b02020" strokeWidth="2" />
          </Glyph>
        </Cell>
        <Cell $w={37} />
        <Cell $w={28} />
      </Status>

      <Taskbar>
        <Start>
          <Glyph viewBox="0 0 20 20" $w={20} $h={20}>
            <path d="M2 4c3-1.5 5-1 7 0l-1.5 6c-2-1-4-1-6 0z" fill="#e8552a" />
            <path d="M10 4.5c2 1 4 1 7 0l-1.5 6c-3 1-5 .5-7-.5z" fill="#6ab42c" />
            <path d="M1 11c2-1 4-1 6 0l-1.5 6c-2-1-4-1-6 0z" fill="#3a78d8" />
            <path d="M8 11.5c2 1 4 1 7 0L13.5 17.5c-3 1-5 .5-7-.5z" fill="#f2c224" />
          </Glyph>
          <StartText>пуск</StartText>
        </Start>
        <Task $on $w={160}><WordDoc />Методичка для зао...</Task>
        <Task $w={159}><WordDoc />Методичка ИНДИВИ...</Task>
        <Task $w={158}><Glyph viewBox="0 0 16 16">{smallFolder}</Glyph>РИО</Task>
        <Lang>RU</Lang>
        <Tray>
          <Chevron><Glyph viewBox="0 0 16 16" $w={12} $h={12}><path d="M10 3L5 8l5 5" fill="none" stroke="#fff" strokeWidth="2.5" /></Glyph></Chevron>
          <Glyph viewBox="0 0 16 16" $w={16} $h={16}><rect x="6" y="1" width="9" height="7" fill="#c8d0e8" stroke="#223" /><rect x="1" y="6" width="9" height="7" fill="#7080c8" stroke="#223" /><path d="M3 14h8" stroke="#eee" strokeWidth="2" /></Glyph>
          <Glyph viewBox="0 0 16 16" $w={16} $h={16}><path d="M3 2c3-2 7 0 10 0 3 2 3 8 1 11-4 3-9 3-12 0C0 9 1 4 3 2z" fill="#8ed434" /><path d="M4 8l3 3 5-5" fill="none" stroke="#fff" strokeWidth="2.2" /></Glyph>
          <Glyph viewBox="0 0 16 16" $w={16} $h={16}><circle cx="6" cy="6" r="5" fill="#9a9a9a" stroke="#333" /><circle cx="6" cy="6" r="2" fill="#ddd" /><path d="M12 8c0 3-2 5-5 6M14 10c-1 2-2 4-4 5" stroke="#2a4ac0" fill="none" /></Glyph>
          <Clock>20:26</Clock>
        </Tray>
      </Taskbar>
    </Win>
  );
}
